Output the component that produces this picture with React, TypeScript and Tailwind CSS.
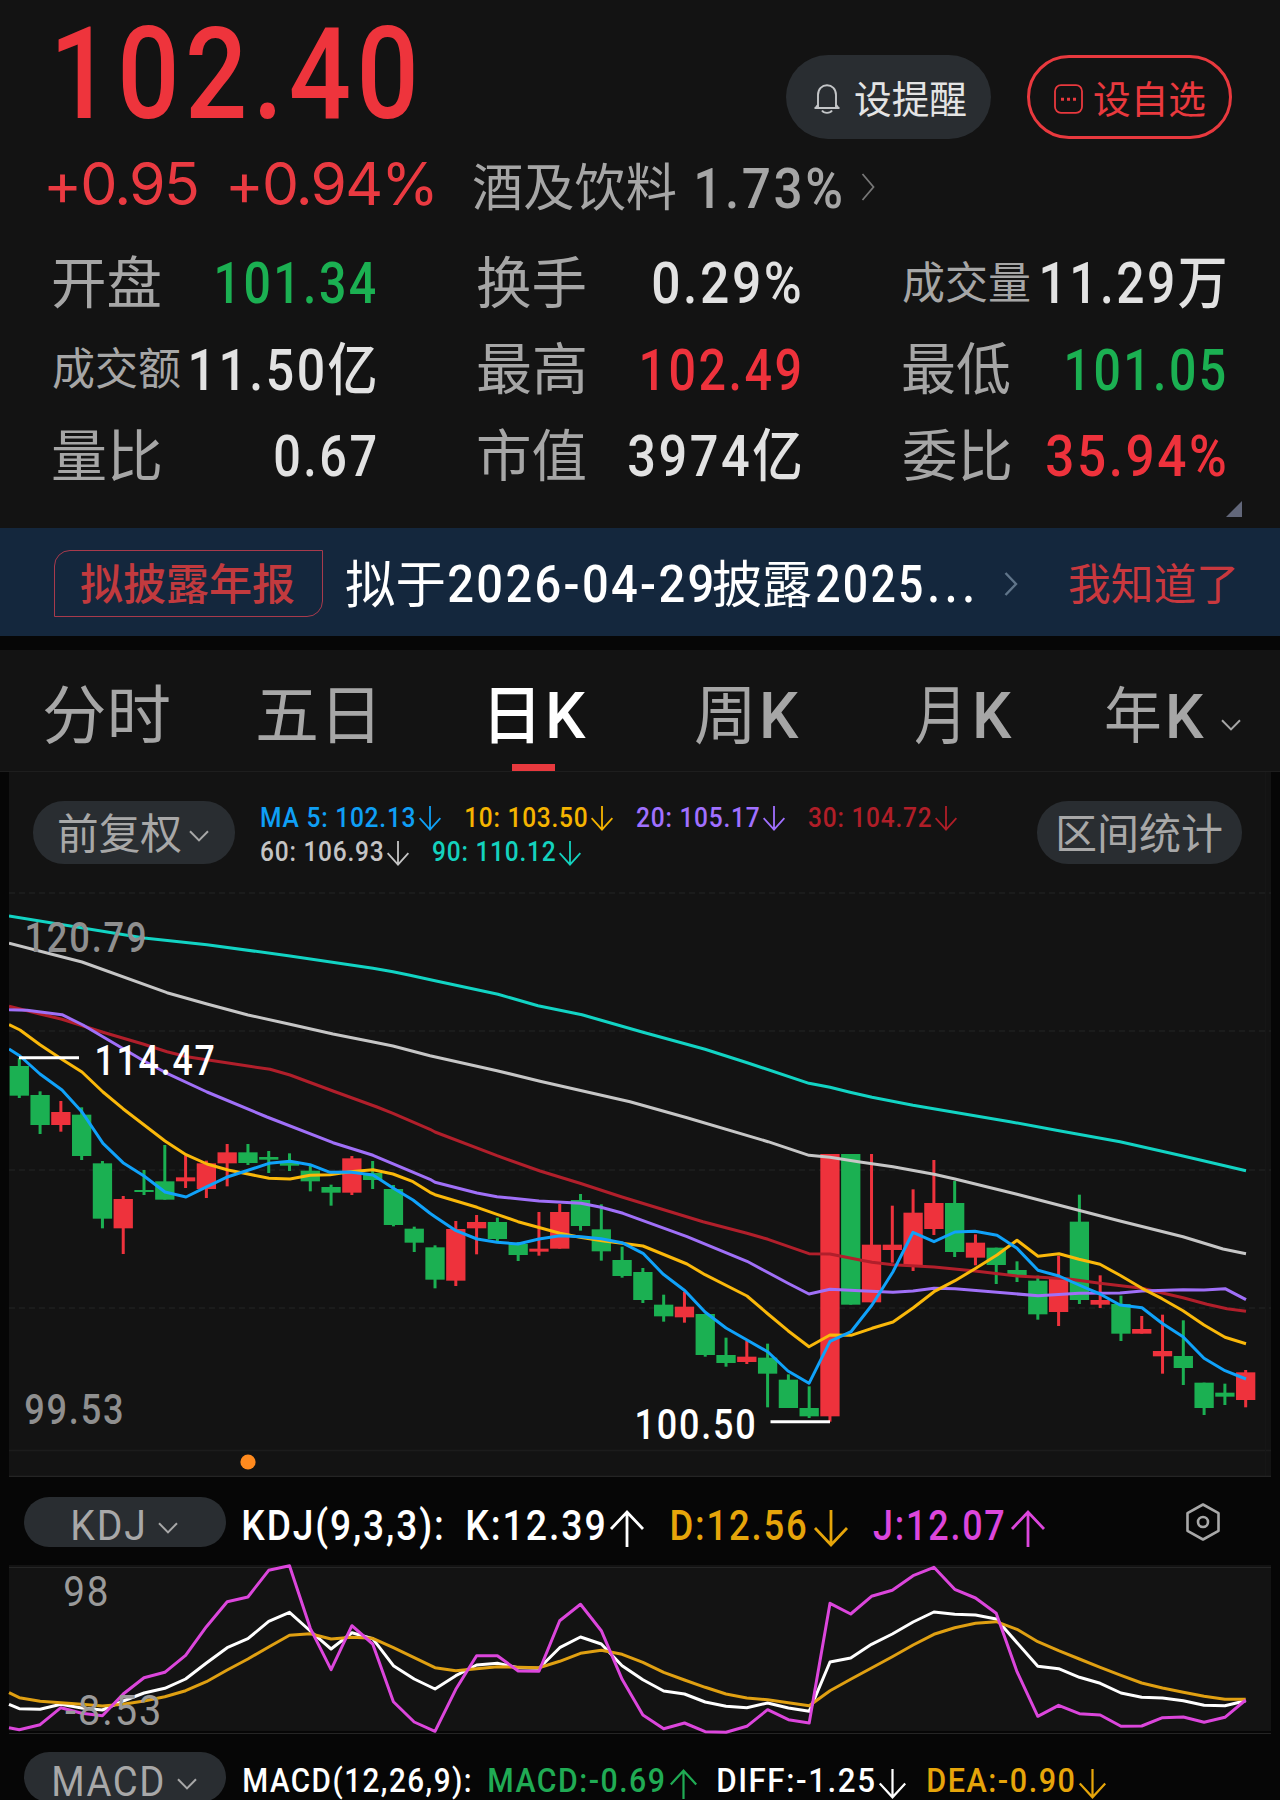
import { useLayoutEffect, useRef, type ReactNode } from "react";

/** Single-line label whose glyphs are condensed or widened to fill its box exactly. */
function Fit({ className = "", children }: { className?: string; children: string }) {
  const box = useRef<HTMLSpanElement>(null);
  const text = useRef<HTMLSpanElement>(null);
  useLayoutEffect(() => {
    const b = box.current;
    const t = text.current;
    const ctx = document.createElement("canvas").getContext("2d");
    if (!b || !t || !ctx) return;
    const cs = getComputedStyle(t);
    const spacing = parseFloat(cs.letterSpacing) || 0;
    ctx.font = `${cs.fontWeight} ${cs.fontSize} ${cs.fontFamily}`;
    const m = ctx.measureText(children);
    const ink = m.actualBoundingBoxLeft + m.actualBoundingBoxRight + spacing * (children.length - 1);
    const k = b.clientWidth / ink;
    t.style.transform = `translateX(${m.actualBoundingBoxLeft * k}px) scaleX(${k})`;
  }, [children]);
  return (
    <span ref={box} className={`block shrink-0 pt-[3px] leading-none ${className}`}>
      <span ref={text} className="block w-max origin-left whitespace-nowrap">
        {children}
      </span>
    </span>
  );
}

function ChevronDown({ className = "" }: { className?: string }) {
  return (
    <svg viewBox="0 0 20 12" className={`h-[12px] w-[20px] shrink-0 ${className}`} fill="none" stroke="currentColor" strokeWidth="2">
      <path d="M1 1.2 L10 10.4 L19 1.2" />
    </svg>
  );
}

function Arrow({ up = false, className = "" }: { up?: boolean; className?: string }) {
  return (
    <svg viewBox="0 0 34 37" className={`shrink-0 overflow-visible ${className}`} fill="none" stroke="currentColor" strokeWidth="2.8" preserveAspectRatio="none">
      {up ? <path d="M17 37 V1.5 M1 19 L17 2 L33 19" /> : <path d="M17 0 V35.5 M1 18 L17 35 L33 18" />}
    </svg>
  );
}

const GREEN = "#1bb052";
const RED = "#ee323c";

/* Candles: [rising, body top, body bottom, wick top, wick bottom], 3 units per pixel. */
const candles: [number, number, number, number, number][] = [
  [0, 558, 647, 535, 654], [0, 645, 735, 634, 762], [1, 696, 735, 663, 755], [0, 704, 828, 682, 840],
  [0, 850, 1016, 843, 1045], [1, 957, 1045, 948, 1122], [0, 930, 936, 870, 945], [0, 904, 959, 795, 959],
  [1, 892, 904, 826, 924], [1, 850, 927, 842, 954], [1, 817, 850, 792, 919], [0, 817, 849, 792, 855],
  [0, 831, 839, 813, 879], [0, 849, 857, 820, 873], [0, 872, 904, 855, 934], [0, 921, 938, 914, 977],
  [1, 835, 938, 828, 945], [0, 879, 900, 843, 927], [0, 927, 1035, 915, 1039], [0, 1046, 1088, 1040, 1116],
  [0, 1102, 1199, 1096, 1225], [1, 1047, 1202, 1023, 1218], [1, 1026, 1045, 1005, 1123], [0, 1026, 1077, 1013, 1085],
  [0, 1092, 1125, 1086, 1143], [1, 1106, 1115, 996, 1127], [1, 996, 1106, 972, 1106], [0, 960, 1038, 942, 1052],
  [0, 1048, 1114, 973, 1142], [0, 1140, 1188, 1100, 1193], [0, 1176, 1260, 1164, 1269], [0, 1274, 1309, 1244, 1325],
  [1, 1280, 1312, 1235, 1328], [0, 1302, 1425, 1302, 1430], [0, 1425, 1449, 1373, 1460], [1, 1430, 1446, 1383, 1452],
  [0, 1433, 1481, 1391, 1582], [0, 1499, 1584, 1483, 1584], [0, 1584, 1609, 1519, 1614], [1, 822, 1609, 822, 1625],
  [0, 822, 1274, 822, 1274], [1, 1094, 1267, 822, 1267], [1, 1094, 1110, 977, 1148], [1, 998, 1158, 928, 1173],
  [1, 969, 1047, 840, 1065], [0, 969, 1116, 903, 1131], [1, 1088, 1133, 1063, 1156], [0, 1103, 1155, 1103, 1212],
  [0, 1170, 1188, 1144, 1206], [0, 1202, 1303, 1187, 1319], [1, 1194, 1296, 1127, 1338], [0, 1025, 1260, 944, 1272],
  [1, 1260, 1274, 1186, 1284], [0, 1272, 1361, 1247, 1383], [1, 1347, 1361, 1308, 1361], [1, 1413, 1429, 1304, 1481],
  [0, 1428, 1464, 1321, 1515], [0, 1508, 1584, 1508, 1605], [0, 1538, 1550, 1511, 1575], [1, 1477, 1560, 1470, 1582],
];

/* Moving averages: x in pixels, y with 3 units per pixel. */
const averages: { color: string; pts: string }[] = [
  { color: "#12d4c4", pts: "9,108 144,174 207,194 290,228 373,265 393,275 410,286 435,302 498,343 538,377 582,404 643,457 705,508 748,549 809,610 830,622 850,637 872,652 913,676 1010,725 1059,752 1120,785 1183,828 1246,872" },
  { color: "#c6c6c6", pts: "9,190 82,246 167,338 207,372 248,405 290,433 333,462 372,485 393,498 430,527 497,572 540,604 630,665 687,713 768,785 809,826 830,832 860,846 893,860 934,883 955,897 1017,943 1120,1023 1183,1070 1223,1107 1246,1121" },
  { color: "#b11f2b", pts: "9,379 40,402 62,418 103,457 143,492 167,515 187,530 248,558 270,568 290,585 333,633 377,681 393,700 430,748 435,756 497,827 540,873 580,910 622,951 703,1025 747,1060 768,1078 809,1121 830,1122 860,1140 872,1147 893,1154 934,1161 975,1173 1017,1188 1067,1196 1100,1210 1142,1225 1183,1253 1207,1273 1227,1286 1246,1294" },
  { color: "#a070f8", pts: "9,389 27,391 62,404 83,435 144,543 167,580 207,636 267,711 333,788 373,826 430,898 435,907 477,939 497,950 539,963 581,970 601,982 623,1000 687,1070 747,1144 788,1210 809,1242 830,1228 860,1232 893,1237 913,1233 934,1225 955,1226 997,1237 1038,1247 1079,1240 1120,1239 1142,1233 1183,1229 1204,1230 1225,1226 1246,1259" },
  { color: "#fab80a", pts: "9,434 20,450 40,494 63,540 82,576 103,636 123,686 165,783 186,824 207,852 228,870 248,882 269,895 290,897 310,886 330,884 350,875 373,869 393,882 413,905 430,937 435,944 477,982 497,1003 518,1025 560,1060 580,1072 602,1082 622,1090 643,1098 687,1152 705,1184 747,1248 768,1302 788,1352 809,1400 830,1365 851,1366 872,1345 893,1326 913,1284 934,1235 955,1202 975,1166 997,1125 1017,1081 1038,1129 1059,1121 1079,1138 1100,1153 1120,1186 1142,1225 1162,1256 1183,1292 1204,1335 1225,1372 1246,1391" },
  { color: "#10a2fa", pts: "9,507 20,528 40,582 62,630 82,696 103,790 123,848 144,888 165,936 186,951 207,920 228,890 248,871 269,850 290,844 310,854 330,877 350,876 373,885 393,924 413,960 430,1000 435,1010 456,1052 477,1077 497,1087 518,1092 539,1077 560,1067 581,1070 601,1076 622,1088 643,1120 663,1182 685,1232 705,1296 726,1344 747,1380 768,1416 788,1473 809,1510 830,1384 851,1355 872,1275 893,1175 913,1057 934,1085 955,1056 975,1054 997,1066 1017,1105 1038,1171 1059,1188 1079,1215 1100,1242 1120,1275 1142,1283 1162,1330 1183,1370 1204,1435 1225,1472 1246,1497" },
];

/* KDJ series, one value per candle, 3 units per pixel; the first entry sits on the left edge. */
const kLine = [853, 866, 868, 853, 864, 870, 843, 819, 805, 777, 729, 683, 656, 604, 577, 633, 687, 638, 656, 737, 777, 807, 767, 735, 730, 743, 745, 683, 651, 672, 737, 779, 813, 822, 846, 859, 863, 849, 864, 874, 726, 714, 673, 642, 606, 576, 583, 585, 597, 668, 739, 746, 772, 790, 819, 832, 834, 842, 856, 857, 842];
const dLine = [818, 833, 844, 848, 853, 858, 853, 843, 830, 812, 785, 750, 717, 681, 646, 641, 657, 652, 655, 683, 713, 743, 752, 746, 740, 742, 743, 724, 700, 691, 703, 727, 757, 780, 802, 822, 834, 839, 848, 857, 812, 778, 744, 710, 675, 643, 623, 610, 605, 628, 665, 692, 717, 742, 766, 789, 804, 817, 829, 838, 838];
const jLine = [923, 929, 914, 863, 880, 887, 822, 773, 757, 706, 620, 545, 531, 451, 437, 625, 749, 617, 672, 845, 906, 934, 808, 707, 707, 753, 754, 602, 553, 632, 778, 885, 926, 909, 935, 937, 919, 869, 899, 909, 550, 582, 529, 511, 467, 442, 508, 534, 580, 755, 889, 856, 881, 885, 919, 918, 893, 891, 907, 892, 840];

const PITCH = 20.786;
const cx = (i: number) => 19.3 + i * PITCH;

const series = (ys: number[]) =>
  ys.map((y, i) => `${i === 0 ? 9 : cx(i - 1).toFixed(1)},${(y / 3).toFixed(1)}`).join(" ");

const scalePts = (pts: string) =>
  pts
    .split(" ")
    .map((p) => {
      const [x, y] = p.split(",").map(Number);
      return `${x},${(y / 3).toFixed(1)}`;
    })
    .join(" ");

function CandleChart() {
  return (
    <svg viewBox="9 772 1262 705" className="block h-[705px] w-[1262px]">
      <g stroke="#1f2020" strokeWidth="1.5" strokeDasharray="6 4">
        <path d="M9 893 H1271 M9 1031 H1271 M9 1170 H1271 M9 1308 H1271" />
      </g>
      <path d="M9 1450.5 H1271" stroke="#1c1c1c" strokeWidth="1.5" />
      <path d="M1265.5 772 V1477" stroke="#161616" strokeWidth="1" />
      <path d="M9 1476.5 H1271" stroke="#242424" strokeWidth="1.5" />
      <g transform="translate(0 880)">
        {candles.map(([up, top, bottom, high, low], i) => (
          <g key={i} fill={up ? RED : GREEN}>
            <rect x={cx(i) - 1.5} y={high / 3} width="3" height={(low - high) / 3} />
            <rect x={cx(i) - 9.65} y={top / 3} width="19.3" height={(bottom - top) / 3} />
          </g>
        ))}
        {averages.map((a) => (
          <polyline key={a.color} points={scalePts(a.pts)} fill="none" stroke={a.color} strokeWidth="3" strokeLinejoin="round" />
        ))}
      </g>
      <path d="M19 1057.7 H79 M770.5 1421.8 H830" stroke="#fff" strokeWidth="3" />
      <circle cx="248" cy="1462" r="7.6" fill="#ff8a1e" />
    </svg>
  );
}

function KdjChart() {
  return (
    <svg viewBox="9 1565 1262 168" className="-mt-[2px] block h-[168px] w-[1262px] overflow-visible">
      <path d="M9 1567.5 H1271 M9 1733.5 H1271" stroke="#252525" strokeWidth="1" />
      <g transform="translate(0 1420)" fill="none" strokeWidth="3" strokeLinejoin="round">
        <polyline points={series(kLine)} stroke="#fff" />
        <polyline points={series(dLine)} stroke="#e0a012" />
        <polyline points={series(jLine)} stroke="#dc46dc" />
      </g>
    </svg>
  );
}

function Stat({ label, labelW, value, valueW, small = false, color = "text-[#e2e2e2]" }: {
  label: string; labelW: string; value: string; valueW: string; small?: boolean; color?: string;
}) {
  return (
    <div className="flex h-[86.5px] items-center justify-between">
      <Fit className={`${labelW} text-[#a6a6a6] ${small ? "text-[44px]" : "text-[56px]"}`}>{label}</Fit>
      <Fit className={`${valueW} ${color} text-[57px] font-medium tracking-[0.05em]`}>{value}</Fit>
    </div>
  );
}

function Row({ className = "", children }: { className?: string; children: ReactNode }) {
  return <div className={`flex items-center ${className}`}>{children}</div>;
}

export default function App() {
  return (
    <div className="h-[1800px] w-[1280px] overflow-hidden bg-[#060606] [font-family:Roboto,'Noto_Sans_CJK_SC',sans-serif]">
      <section className="h-[528px] bg-[#131313]">
        <div className="flex h-[142px] items-start pl-[58px] pr-[48px]">
          <Row className="h-[144px]">
            <Fit className="w-[356px] text-[128px] font-medium tracking-[0.05em] text-[#ee343c]">102.40</Fit>
          </Row>
          <div className="ml-auto mt-[55px] flex gap-[36px]">
            <button className="flex h-[84px] w-[205px] items-center rounded-[42px] bg-[#292d31] pl-[28px] text-[#e4e4e4]">
              <svg viewBox="0 0 26 30" className="mt-[4px] h-[30px] w-[26px]" fill="none" stroke="#c4c6c8" strokeWidth="1.9">
                <path d="M4 23.5 V11 C4 5 8 1.2 13 1.2 S22 5 22 11 V23.5" />
                <path d="M0.5 24 H25.5 M3.8 21 L1.5 24 M22.2 21 L24.5 24" />
                <path d="M8 26.5 C10 29.6 16 29.6 18 26.5" />
              </svg>
              <Fit className="ml-[15px] mt-[2px] w-[111px] text-[38px]">设提醒</Fit>
            </button>
            <button className="flex h-[84px] w-[205px] items-center rounded-[42px] border-[3px] border-[#e9393e] pl-[24px] text-[#e9393e]">
              <svg viewBox="0 0 29 30" className="mt-[4px] h-[30px] w-[29px]" fill="none" stroke="currentColor" strokeWidth="1.8">
                <rect x="1" y="1.2" width="27" height="27.6" rx="6" />
                <path d="M7 15.2 h3 M13 15.2 h3 M19 15.2 h3" strokeWidth="3" />
              </svg>
              <Fit className="ml-[11px] mt-[2px] w-[111px] text-[38px]">设自选</Fit>
            </button>
          </div>
        </div>

        <Row className="h-[86px] pl-[48px] text-[#a6a6a6]">
          <Fit className="mb-[6px] w-[149px] text-[59px] tracking-[-0.03em] text-[#ea3a41] [font-family:Inter]">+0.95</Fit>
          <Fit className="mb-[6px] ml-[33px] w-[203px] text-[59px] tracking-[-0.03em] text-[#ea3a41] [font-family:Inter]">+0.94%</Fit>
          <Fit className="ml-[40px] mt-[4px] w-[203px] text-[51px]">酒及饮料</Fit>
          <Fit className="ml-[21px] mt-[4px] w-[144px] text-[56px] font-medium tracking-[0.05em]">1.73%</Fit>
          <svg viewBox="0 0 14 28" className="ml-[20px] mt-[4px] h-[28px] w-[14px]" fill="none" stroke="#777" strokeWidth="1.8">
            <path d="M1.5 1 L12.5 14 L1.5 27" />
          </svg>
        </Row>

        <div className="mt-[11px] grid grid-cols-[322px_322px_322px] gap-x-[103px] pl-[53px]">
          <Stat label="开盘" labelW="w-[107px]" value="101.34" valueW="w-[158px]" color="text-[#1bb052]" />
          <Stat label="换手" labelW="w-[107px]" value="0.29%" valueW="w-[147px]" />
          <Stat label="成交量" labelW="w-[127px]" value="11.29万" valueW="w-[183px]" small />
          <Stat label="成交额" labelW="w-[127px]" value="11.50亿" valueW="w-[184px]" small />
          <Stat label="最高" labelW="w-[107px]" value="102.49" valueW="w-[158px]" color="text-[#ee323c]" />
          <Stat label="最低" labelW="w-[107px]" value="101.05" valueW="w-[158px]" color="text-[#1bb052]" />
          <Stat label="量比" labelW="w-[107px]" value="0.67" valueW="w-[100px]" />
          <Stat label="市值" labelW="w-[107px]" value="3974亿" valueW="w-[171px]" />
          <Stat label="委比" labelW="w-[107px]" value="35.94%" valueW="w-[178px]" color="text-[#ee323c]" />
        </div>
        <svg viewBox="0 0 16 16" className="ml-[1226px] mt-[2px] h-[16px] w-[16px]">
          <path d="M0 16 L16 0 V16 Z" fill="#62677a" />
        </svg>
      </section>

      <Row className="h-[108px] bg-[#14273d] pl-[54px] pt-[3px] text-white">
        <Row className="h-[67px] w-[269px] rounded-br-[16px] rounded-tl-[16px] border-[1.5px] border-[#a83a4c] pl-[26px] text-[#c23a3e]">
          <Fit className="mt-[1px] w-[213px] text-[43px] font-medium">拟披露年报</Fit>
        </Row>
        <Fit className="ml-[23px] w-[98px] text-[51px]">拟于</Fit>
        <Fit className="ml-[5px] w-[263px] text-[52px] font-medium tracking-[0.05em]">2026-04-29</Fit>
        <Fit className="ml-[1px] w-[98px] text-[51px]">披露</Fit>
        <Fit className="ml-[6px] w-[105px] text-[52px] font-medium tracking-[0.05em]">2025</Fit>
        <Fit className="ml-[8px] w-[42px] text-[52px] font-medium tracking-[0.1em]">...</Fit>
        <svg viewBox="0 0 14 24" className="ml-[32px] h-[24px] w-[14px]" fill="none" stroke="#60758a" strokeWidth="2.4">
          <path d="M1.5 1 L12 12 L1.5 23" />
        </svg>
        <Fit className="ml-[51px] w-[166px] text-[43px] text-[#c9383e]">我知道了</Fit>
      </Row>

      <nav className="mt-[14px] flex h-[122px] items-start border-b border-[#1e1e1e] bg-[#131313] pl-[44px] text-[64px] text-[#a6a6a6]">
        <Row className="h-[131px]">
          <Fit className="w-[125px]">分时</Fit>
          <Fit className="ml-[89px] w-[115px]">五日</Fit>
        </Row>
        <div className="ml-[118px] w-[95px] font-medium text-white">
          <Row className="h-[131px]">
            <Fit className="w-[42px]">日</Fit>
            <Fit className="ml-[16px] w-[37px]">K</Fit>
          </Row>
          <div className="-mt-[17px] ml-[21px] h-[7px] w-[43px] bg-[#e8393e]" />
        </div>
        <Row className="h-[131px]">
          <Fit className="ml-[110px] w-[54px]">周</Fit>
          <Fit className="ml-[13px] w-[36px] font-medium">K</Fit>
          <Fit className="ml-[116px] w-[43px]">月</Fit>
          <Fit className="ml-[18px] w-[36px] font-medium">K</Fit>
          <Fit className="ml-[94px] w-[54px] text-[61px]">年</Fit>
          <Fit className="ml-[9px] w-[35px] text-[61px] font-medium">K</Fit>
          <ChevronDown className="ml-[17px] mt-[18px]" />
        </Row>
      </nav>

      <section className="relative mx-[9px] h-[705px] bg-[#131313]">
        <CandleChart />
        <div className="absolute inset-x-0 top-0 flex items-start pl-[24px] pt-[29px]">
          <Row className="h-[63px] w-[202px] rounded-[31px] bg-[#292d31] pl-[26px] text-[#a8a8a8]">
            <Fit className="mt-[2px] w-[122px] text-[42px]">前复权</Fit>
            <ChevronDown className="ml-[8px] mt-[6px]" />
          </Row>
          <div className="-mt-[2px] ml-[26px] w-[776px] text-[27.5px] font-medium tracking-[0.03em]">
            <Row className="h-[34px]">
              <Row className="text-[#0f9ff5]"><Fit className="w-[154px]">MA 5: 102.13</Fit><Arrow className="ml-[4px] mt-[5px] h-[25px] w-[22px]" /></Row>
              <Row className="ml-[25px] text-[#f5b400]"><Fit className="w-[121px]">10: 103.50</Fit><Arrow className="ml-[4px] mt-[5px] h-[25px] w-[22px]" /></Row>
              <Row className="ml-[24px] text-[#a070ff]"><Fit className="w-[122px]">20: 105.17</Fit><Arrow className="ml-[4px] mt-[5px] h-[25px] w-[22px]" /></Row>
              <Row className="ml-[24px] text-[#b01e28]"><Fit className="w-[122px]">30: 104.72</Fit><Arrow className="ml-[4px] mt-[5px] h-[25px] w-[22px]" /></Row>
            </Row>
            <Row className="h-[35px]">
              <Row className="text-[#c4c4c4]"><Fit className="w-[122px]">60: 106.93</Fit><Arrow className="ml-[4px] mt-[5px] h-[25px] w-[22px]" /></Row>
              <Row className="ml-[24px] text-[#14d2be]"><Fit className="w-[122px]">90: 110.12</Fit><Arrow className="ml-[4px] mt-[5px] h-[25px] w-[22px]" /></Row>
            </Row>
          </div>
          <Row className="h-[63px] w-[205px] rounded-[31px] bg-[#292d31] pl-[22px] text-[#a8a8a8]">
            <Fit className="mt-[2px] w-[163px] text-[42px]">区间统计</Fit>
          </Row>
        </div>
        <Fit className="absolute left-[18px] top-[142px] w-[118px] text-[42px] font-medium tracking-[0.05em] text-[#8f8f8f]">120.79</Fit>
        <Fit className="absolute left-[88px] top-[265px] w-[117px] text-[42px] font-medium tracking-[0.05em] text-white">114.47</Fit>
        <Fit className="absolute left-[16px] top-[614px] w-[97px] text-[42px] font-medium tracking-[0.05em] text-[#8f8f8f]">99.53</Fit>
        <Fit className="absolute left-[628px] top-[629px] w-[117px] text-[42px] font-medium tracking-[0.05em] text-white">100.50</Fit>
      </section>

      <Row className="h-[90px] pl-[24px] text-[42px] font-medium tracking-[0.05em] text-white">
        <Row className="h-[50px] w-[202px] rounded-[25px] bg-[#292d31] pl-[49px] pt-[4px] text-[#a8a8a8]">
          <Fit className="w-[70px] font-normal">KDJ</Fit>
          <ChevronDown className="ml-[15px] mt-[7px]" />
        </Row>
        <Row className="ml-[18px] pt-[4px]">
          <Fit className="w-[198px]">KDJ(9,3,3):</Fit>
          <Row className="ml-[26px]"><Fit className="w-[136px]">K:12.39</Fit><Arrow up className="ml-[6px] mt-[9px] h-[37px] w-[34px]" /></Row>
          <Row className="ml-[28px] text-[#e6a50a]"><Fit className="w-[134px]">D:12.56</Fit><Arrow className="ml-[8px] mt-[9px] h-[37px] w-[34px]" /></Row>
          <Row className="ml-[25px] text-[#dc46dc]"><Fit className="w-[131px]">J:12.07</Fit><Arrow up className="ml-[7px] mt-[9px] h-[37px] w-[34px]" /></Row>
        </Row>
        <svg viewBox="0 0 34 38" className="ml-[141px] h-[38px] w-[34px]" fill="none" stroke="#a8a8a8" strokeWidth="2.6">
          <path d="M17 1.5 L32.5 10.2 V27.8 L17 36.5 L1.5 27.8 V10.2 Z" strokeLinejoin="round" />
          <circle cx="17" cy="19" r="5" />
        </svg>
      </Row>

      <section className="relative mx-[9px] h-[166px] bg-[#131313]">
        <KdjChart />
        <Fit className="absolute left-[56px] top-[3px] w-[42px] text-[42px] tracking-[0.05em] text-[#9a9a9a]">98</Fit>
        <Fit className="absolute left-[56px] top-[122px] w-[94px] text-[42px] tracking-[0.05em] text-[#9a9a9a]">-8.53</Fit>
      </section>

      <Row className="h-[92px] pl-[24px] text-[33.5px] font-medium tracking-[0.05em] text-white">
        <Row className="h-[50px] w-[202px] rounded-[25px] bg-[#292d31] pl-[30px] pt-[6px] text-[#a8a8a8]">
          <Fit className="w-[109px] text-[42px] font-normal">MACD</Fit>
          <ChevronDown className="ml-[14px] mt-[7px]" />
        </Row>
        <Row className="ml-[18px] pt-[5px]">
          <Fit className="w-[226px]">MACD(12,26,9):</Fit>
          <Row className="ml-[19px] text-[#20ab54]"><Fit className="w-[175px]">MACD:-0.69</Fit><Arrow up className="ml-[6px] mt-[8px] h-[30px] w-[27px]" /></Row>
          <Row className="ml-[21px]"><Fit className="w-[156px]">DIFF:-1.25</Fit><Arrow className="ml-[5px] mt-[8px] h-[30px] w-[27px]" /></Row>
          <Row className="ml-[22px] text-[#e6a50a]"><Fit className="w-[146px]">DEA:-0.90</Fit><Arrow className="ml-[5px] mt-[8px] h-[30px] w-[27px]" /></Row>
        </Row>
      </Row>
    </div>
  );
}
